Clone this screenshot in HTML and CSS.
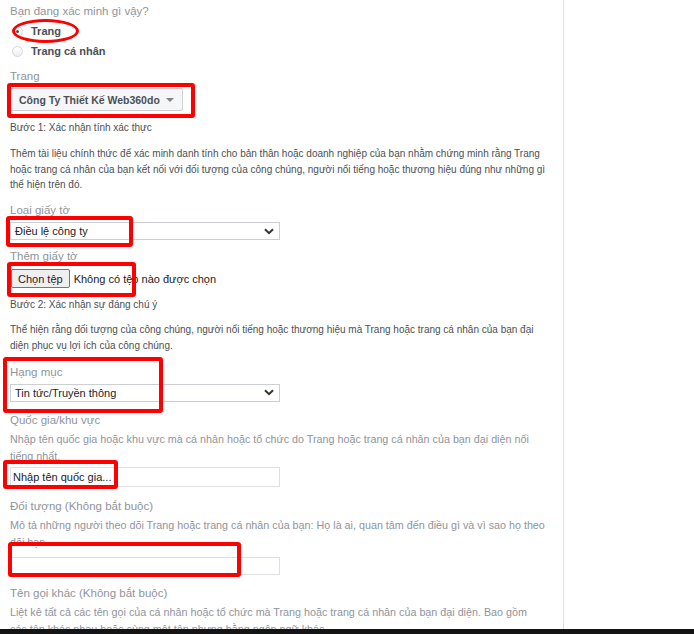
FILE: index.html
```html
<!DOCTYPE html>
<html lang="vi">
<head>
<meta charset="utf-8">
<title>Xác minh</title>
<link rel="stylesheet" href="styles.css">
</head>
<body>
<div class="screen">
  <div class="page">
    <main class="form">
      <div class="label title">Bạn đang xác minh gì vậy?</div>
      <div class="radios">
        <label class="radio-row"><span class="radio checked"></span><span class="radio-text">Trang</span></label>
        <label class="radio-row"><span class="radio"></span><span class="radio-text">Trang cá nhân</span></label>
      </div>
      <div class="label l-trang">Trang</div>
      <div class="dropdown">
        <span>Công Ty Thiết Kế Web360do</span>
        <span class="caret"></span>
      </div>
      <div class="step s1">Bước 1: Xác nhận tính xác thực</div>
      <p class="para p1">Thêm tài liệu chính thức để xác minh danh tính cho bản thân hoặc doanh nghiệp của bạn nhằm chứng minh rằng Trang hoặc trang cá nhân của bạn kết nối với đối tượng của công chúng, người nổi tiếng hoặc thương hiệu đúng như những gì thể hiện trên đó.</p>
      <div class="label l-loai">Loại giấy tờ</div>
      <div class="select">
        <span>Điều lệ công ty</span>
        <svg class="chev" width="10" height="7" viewBox="0 0 10 7"><path d="M1 1.2 L5 5.2 L9 1.2" fill="none" stroke="#333" stroke-width="2"/></svg>
      </div>
      <div class="label l-them">Thêm giấy tờ</div>
      <div class="file-row">
        <span class="file-btn">Chọn tệp</span>
        <span class="file-text">Không có tệp nào được chọn</span>
      </div>
      <div class="step s2">Bước 2: Xác nhận sự đáng chú ý</div>
      <p class="para p2">Thể hiện rằng đối tượng của công chúng, người nổi tiếng hoặc thương hiệu mà Trang hoặc trang cá nhân của bạn đại diện phục vụ lợi ích của công chúng.</p>
      <div class="label l-hang">Hạng mục</div>
      <div class="select">
        <span>Tin tức/Truyền thông</span>
        <svg class="chev" width="10" height="7" viewBox="0 0 10 7"><path d="M1 1.2 L5 5.2 L9 1.2" fill="none" stroke="#333" stroke-width="2"/></svg>
      </div>
      <div class="label l-quoc">Quốc gia/khu vực</div>
      <p class="desc">Nhập tên quốc gia hoặc khu vực mà cá nhân hoặc tổ chức do Trang hoặc trang cá nhân của bạn đại diện nổi tiếng nhất.</p>
      <div class="input in-quoc">Nhập tên quốc gia...</div>
      <div class="label l-doi">Đối tượng (Không bắt buộc)</div>
      <p class="desc">Mô tả những người theo dõi Trang hoặc trang cá nhân của bạn: Họ là ai, quan tâm đến điều gì và vì sao họ theo dõi bạn.</p>
      <div class="input in-doi"></div>
      <div class="label l-ten">Tên gọi khác (Không bắt buộc)</div>
      <p class="desc desc-ten">Liệt kê tất cả các tên gọi của cá nhân hoặc tổ chức mà Trang hoặc trang cá nhân của bạn đại diện. Bao gồm các tên khác nhau hoặc cùng một tên nhưng bằng ngôn ngữ khác.</p>
    </main>
    <aside class="side"></aside>

    <div class="mark ellipse"></div>
    <div class="mark box b1"></div>
    <div class="mark box b2"></div>
    <div class="mark box b3"></div>
    <div class="mark box b4"></div>
    <div class="mark box b5"></div>
    <div class="mark box b6"></div>
  </div>
  <div class="taskbar"></div>
</div>
</body>
</html>
```
FILE: styles.css
```css
* { box-sizing: border-box; }
html, body { margin: 0; padding: 0; background: #fff; }
body { font-family: "Liberation Sans", Arial, sans-serif; color: #1d2129; }

.screen { width: 694px; height: 634px; overflow: hidden; display: flex; flex-direction: column; }
.page { position: relative; height: 629px; display: flex; overflow: hidden; }
.form { width: 564px; border-right: 1px solid #dddfe2; padding: 0 15px 0 10px; flex: none; }
.side { flex: 1; }
.taskbar { height: 5px; background: #141414; flex: none; }

.label { font-size: 11.5px; line-height: 16px; color: #90949c; }
.title { margin-top: 3px; }
.radios { margin-top: 2px; }
.radio-row { display: flex; align-items: center; height: 20px; }
.radio { width: 11px; height: 11px; border-radius: 50%; border: 1px solid #d3d6db; background: linear-gradient(#fff, #eceef1); margin: 0 8px 0 2px; position: relative; flex: none; }
.radio.checked::after { content: ""; position: absolute; left: 3px; top: 3px; width: 3px; height: 3px; border-radius: 50%; background: #4b4f56; }
.radio-text { font-size: 11px; font-weight: bold; color: #4b4f56; }

.l-trang { margin-top: 7px; }
.dropdown { margin-top: 4px; width: 173px; height: 23px; border: 1px solid #ccd0d5; border-radius: 2px; background: #f5f6f7; display: flex; align-items: center; justify-content: space-between; padding: 0 8px; font-size: 10.5px; font-weight: bold; color: #4b4f56; white-space: nowrap; }
.caret { width: 0; height: 0; border-left: 4px solid transparent; border-right: 4px solid transparent; border-top: 4px solid #7f8389; }

.step { font-size: 10px; line-height: 16px; color: #4b4f56; }
.s1 { margin-top: 9px; }
.s2 { margin-top: 9px; }
.para { margin: 0; font-size: 10px; line-height: 15.5px; color: #4b4f56; }
.p1 { margin-top: 10px; }
.p2 { margin-top: 9px; }

.l-loai { margin-top: 9.5px; }
.select { margin-top: 4px; width: 270px; height: 18px; border: 1px solid #ccd0d5; background: #fff; display: flex; align-items: center; justify-content: space-between; padding: 0 5px 0 4px; font-size: 11px; color: #1d2129; }
.chev { flex: none; }

.l-them { margin-top: 8px; }
.file-row { margin-top: 5px; height: 19px; display: flex; align-items: center; font-size: 11px; color: #1d2129; }
.file-btn { height: 19px; margin-left: 1px; padding: 0 6px; border: 1px solid #767676; border-radius: 2px; background: #efefef; display: flex; align-items: center; }
.file-text { margin-left: 4px; }

.l-hang { margin-top: 10.5px; }
.l-quoc { margin-top: 10px; }
.desc { margin: 3.5px 0 0; font-size: 10.75px; line-height: 17px; color: #90949c; }
.desc-ten { max-width: 535px; }
.input { width: 270px; border: 1px solid #dddfe2; background: #fff; font-size: 11px; color: #1d2129; padding: 0 2px; display: flex; align-items: center; }
.in-quoc { margin-top: 1.5px; height: 20px; }
.l-doi { margin-top: 11px; }
.in-doi { margin-top: 5.5px; height: 18px; }
.l-ten { margin-top: 10px; }

.mark { position: absolute; border: 4px solid #f00; }
.ellipse { left: 12px; top: 19px; width: 67px; height: 24px; border-width: 3px; border-radius: 50%; }
.box { border-radius: 3px; }
.b1 { left: 7px; top: 83px; width: 188px; height: 35px; }
.b2 { left: 6px; top: 216px; width: 127px; height: 31px; }
.b3 { left: 7px; top: 262px; width: 129px; height: 35px; }
.b4 { left: 3px; top: 357px; width: 160px; height: 56px; }
.b5 { left: 3px; top: 460px; width: 115px; height: 29px; }
.b6 { left: 8px; top: 542px; width: 233px; height: 35px; }
```
